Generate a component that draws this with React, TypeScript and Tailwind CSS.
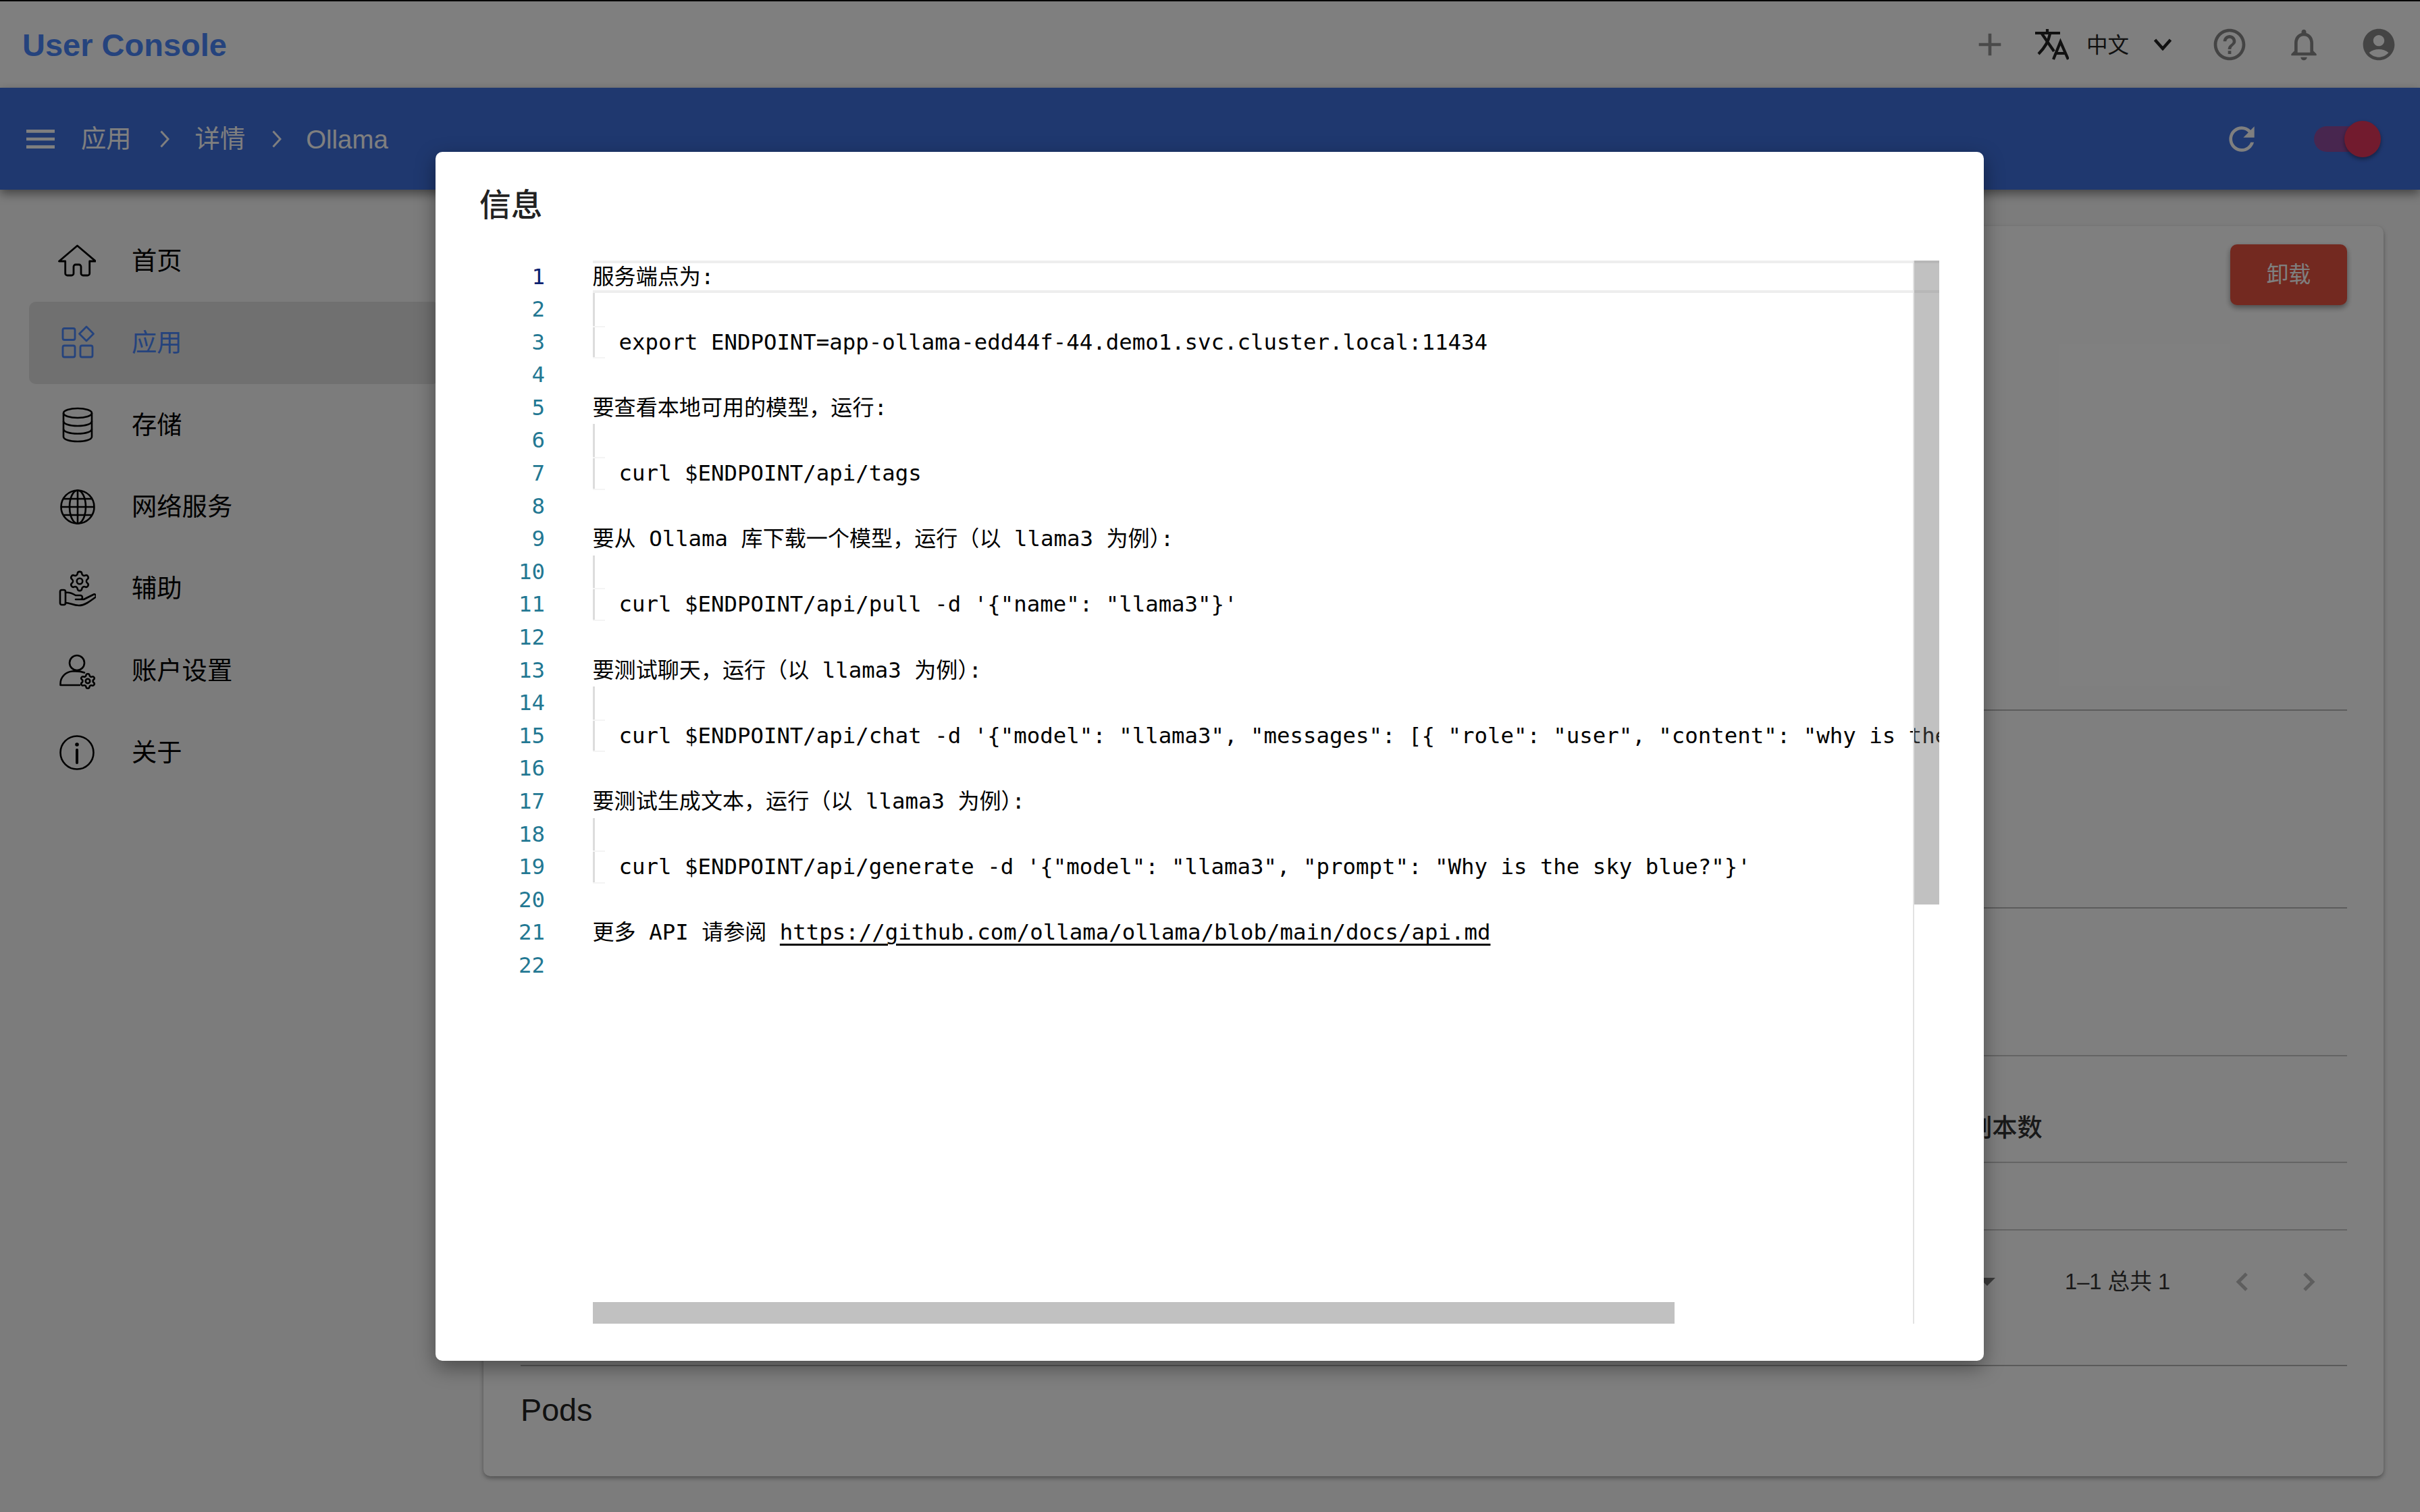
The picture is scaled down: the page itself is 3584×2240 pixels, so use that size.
import React from 'react';
import { Settings } from 'lucide-react';

const uiFont = 'font-["Liberation_Sans","Noto_Sans_CJK_SC",sans-serif]';

type Line = { text?: string; quote?: boolean; link?: [string, string]; tick?: boolean };

const lines: Line[] = [
    { text: '服务端点为:' },
    { quote: true },
    { quote: true, tick: true, text: '  export ENDPOINT=app-ollama-edd44f-44.demo1.svc.cluster.local:11434' },
    {},
    { text: '要查看本地可用的模型，运行:' },
    { quote: true },
    { quote: true, tick: true, text: '  curl $ENDPOINT/api/tags' },
    {},
    { text: '要从 Ollama 库下载一个模型，运行（以 llama3 为例）:' },
    { quote: true },
    { quote: true, tick: true, text: `  curl $ENDPOINT/api/pull -d '{"name": "llama3"}'` },
    {},
    { text: '要测试聊天，运行（以 llama3 为例）:' },
    { quote: true },
    { quote: true, tick: true, text: `  curl $ENDPOINT/api/chat -d '{"model": "llama3", "messages": [{ "role": "user", "content": "why is the sky blue?" }]}'` },
    {},
    { text: '要测试生成文本，运行（以 llama3 为例）:' },
    { quote: true },
    { quote: true, tick: true, text: `  curl $ENDPOINT/api/generate -d '{"model": "llama3", "prompt": "Why is the sky blue?"}'` },
    {},
    { link: ['更多 API 请参阅 ', 'https://github.com/ollama/ollama/blob/main/docs/api.md'] },
    {},
];

// CJK runs sit a touch smaller than the mono cells, and the closing paren is half width
const renderRuns = (text: string) =>
    text.split(/([\u3000-\u9fff\uff00-\uffef]+)/).map((run, i) => {
        if (i % 2 === 0) return run;
        if (run.endsWith('）')) {
            return (
                <span key={i} className="text-[32.1px]">
                    {run.slice(0, -1)}
                    <span className='[font-feature-settings:"halt"]'>）</span>
                </span>
            );
        }
        return <span key={i} className="text-[32.1px]">{run}</span>;
    });

const HomeIcon = () => (
    <svg width="56" height="56" viewBox="0 0 56 56" fill="none" stroke="currentColor" strokeWidth="2.8" strokeLinejoin="round">
        <path d="M28.5 5 L1.5 28 H10.7 V46 a3 3 0 0 0 3 3 H20 a3 3 0 0 0 3-3 V36 a3 3 0 0 1 3-3 h5 a3 3 0 0 1 3 3 V46 a3 3 0 0 0 3 3 H43.7 a3 3 0 0 0 3-3 V28 H55.5 Z" />
    </svg>
);

const AppsIcon = () => (
    <svg width="56" height="56" viewBox="0 0 56 56" fill="none" stroke="currentColor" strokeWidth="2.8" strokeLinejoin="round">
        <rect x="7" y="6.5" width="18" height="17" rx="2.5" />
        <rect x="7" y="32" width="18" height="17" rx="2.5" />
        <rect x="33" y="32" width="18" height="17" rx="2.5" />
        <path d="M42 4 L52.5 14.5 L42 25 L31.5 14.5 Z" />
    </svg>
);

const DatabaseIcon = () => (
    <svg width="56" height="56" viewBox="0 0 56 56" fill="none" stroke="currentColor" strokeWidth="2.6">
        <ellipse cx="29" cy="11" rx="21" ry="7" />
        <path d="M8 11 V46 C8 50 17 53 29 53 C41 53 50 50 50 46 V11" />
        <path d="M8 23 C8 27 17 30 29 30 C41 30 50 27 50 23" />
        <path d="M8 34.500 C8 38.500 17 41.500 29 41.500 C41 41.500 50 38.500 50 34.500" />
    </svg>
);

const GlobeIcon = () => (
    <svg width="56" height="56" viewBox="0 0 56 56" fill="none" stroke="currentColor" strokeWidth="2.6">
        <circle cx="29" cy="28" r="24.500" />
        <ellipse cx="29" cy="28" rx="12" ry="24.500" />
        <path d="M29 3.500 V52.500 M4.500 28 H53.500 M8 16 H50 M8 40 H50" />
    </svg>
);

const HandGearIcon = () => (
    <svg width="56" height="56" viewBox="0 0 56 56" fill="none" stroke="currentColor" strokeWidth="2.6" strokeLinecap="round" strokeLinejoin="round">
        <Settings x={15} y={0} width={34} height={34} strokeWidth={1.8} />
        <rect x="3" y="30" width="8" height="22" rx="2.5" />
        <path d="M11 34 C17 33 21 35 26 38 H33 a3 3 0 0 1 0 6 H26 M33 44 h5 L52 37 a2.5 2.5 0 0 1 3 4 C47 47 39 53 31 53 C22 53 18 49 11 49" />
    </svg>
);

const UserGearIcon = () => (
    <svg width="56" height="56" viewBox="0 0 56 56" fill="none" stroke="currentColor" strokeWidth="2.6" strokeLinecap="round" strokeLinejoin="round">
        <circle cx="28" cy="17" r="11" />
        <path d="M32 50 H3.500 V48 C3.500 38 11 30.500 21 29.500 C28 29 34 29.500 39 31.500" />
        <Settings x={31} y={31} width={26} height={26} strokeWidth={2.4} />
    </svg>
);

const InfoIcon = () => (
    <svg width="56" height="56" viewBox="0 0 56 56" fill="none" stroke="currentColor" strokeWidth="2.6" strokeLinecap="round">
        <circle cx="28" cy="29" r="24.500" />
        <circle cx="28" cy="17" r="2.800" fill="currentColor" stroke="none" />
        <path d="M28 25 V44" strokeWidth="4" />
    </svg>
);

const TranslateIcon = () => (
    <svg width="50" height="46" viewBox="0 0 50 46" fill="none" stroke="currentColor" strokeWidth="4.2">
        <path d="M0 6 H37 M18 0 V6" />
        <path d="M10 7 L28 33 M22 7 C20 18 13 29 5 37" />
        <path d="M27 45 L37.500 19 L49 45 M31 36 H45" />
    </svg>
);

const menuItems = [
    { label: '首页', icon: <HomeIcon /> },
    { label: '应用', icon: <AppsIcon />, active: true },
    { label: '存储', icon: <DatabaseIcon /> },
    { label: '网络服务', icon: <GlobeIcon /> },
    { label: '辅助', icon: <HandGearIcon /> },
    { label: '账户设置', icon: <UserGearIcon /> },
    { label: '关于', icon: <InfoIcon /> },
];

const Crumb = () => (
    <svg width="14" height="26" viewBox="0 0 14 26" fill="none" stroke="currentColor" strokeWidth="3" className="shrink-0">
        <path d="M1.500 1.500 L12 13 L1.500 24.500" />
    </svg>
);

export default function App() {
    return (
        <div className={`relative w-[3584px] h-[2240px] overflow-hidden bg-[#f8f8f8] ${uiFont}`}>
            {/* Top bar */}
            <div className="h-[130px] bg-white border-t-2 border-black flex items-center pl-[33px] pr-[33px]">
                <span className="text-[47px] font-bold text-[#4a86fa] leading-none">User Console</span>
                <div className="ml-auto flex items-center">
                    <svg width="56" height="56" viewBox="0 0 24 24" fill="#949494"><path d="M19 13h-6v6h-2v-6H5v-2h6V5h2v6h6v2z" /></svg>
                    <div className="ml-[39px] text-[#222222]"><TranslateIcon /></div>
                    <span className="ml-[26px] pt-[3px] text-[31.5px] text-[#222222]">中文</span>
                    <svg width="26" height="18" viewBox="0 0 26 18" fill="none" stroke="#222222" strokeWidth="4.500" className="ml-[37px]"><path d="M1.500 2 L13 15 L24.500 2" /></svg>
                    <svg width="56" height="56" viewBox="0 0 24 24" fill="#888888" className="ml-[58px]"><path d="M11 18h2v-2h-2v2zm1-16C6.480 2 2 6.480 2 12s4.480 10 10 10 10-4.480 10-10S17.520 2 12 2zm0 18c-4.410 0-8-3.590-8-8s3.590-8 8-8 8 3.590 8 8-3.590 8-8 8zm0-14c-2.210 0-4 1.790-4 4h2c0-1.100.9-2 2-2s2 .9 2 2c0 2-3 1.750-3 5h2c0-2.250 3-2.500 3-5 0-2.210-1.790-4-4-4z" /></svg>
                    <svg width="56" height="56" viewBox="0 0 24 24" fill="#888888" className="ml-[54px]"><path d="M12 22c1.100 0 2-.9 2-2h-4c0 1.100.9 2 2 2zm6-6v-5c0-3.070-1.630-5.640-4.500-6.320V4c0-.83-.67-1.500-1.500-1.500s-1.500.67-1.500 1.500v.68C7.640 5.360 6 7.920 6 11v5l-2 2v1h16v-1l-2-2zm-2 1H8v-6c0-2.480 1.510-4.500 4-4.500s4 2.020 4 4.500v6z" /></svg>
                    <svg width="56" height="56" viewBox="0 0 24 24" fill="#888888" className="ml-[55px]"><path d="M12 2C6.480 2 2 6.480 2 12s4.480 10 10 10 10-4.480 10-10S17.520 2 12 2zm0 4c1.930 0 3.500 1.570 3.500 3.500S13.930 13 12 13s-3.500-1.570-3.500-3.500S10.070 6 12 6zm0 14c-2.030 0-4.430-.82-6.140-2.880C7.550 15.800 9.680 15 12 15s4.450.8 6.140 2.120C16.430 19.180 14.030 20 12 20z" /></svg>
                </div>
            </div>

            {/* Blue breadcrumb bar */}
            <div className="relative z-10 h-[151px] bg-[#3f70df] text-white shadow-[0_6px_14px_rgba(0,0,0,0.45)] flex items-center pl-[32px] pr-[58px] text-[37.3px] leading-none">
                <svg width="56" height="56" viewBox="0 0 24 24" fill="currentColor" className="shrink-0"><path d="M3 18h18v-2H3v2zm0-5h18v-2H3v2zm0-7v2h18V6H3z" /></svg>
                <span className="ml-[32px] pt-[3px]">应用</span>
                <div className="ml-[42px]"><Crumb /></div>
                <span className="ml-[38px] pt-[3px]">详情</span>
                <div className="ml-[40px]"><Crumb /></div>
                <span className="ml-[36px] pt-[3px] text-[38.4px]">Ollama</span>
                <svg width="56" height="56" viewBox="0 0 24 24" fill="currentColor" className="ml-auto"><path d="M17.650 6.350C16.200 4.900 14.210 4 12 4c-4.420 0-7.990 3.580-7.990 8s3.570 8 7.990 8c3.730 0 6.840-2.550 7.730-6h-2.080c-.82 2.330-3.040 4-5.650 4-3.310 0-6-2.690-6-6s2.690-6 6-6c1.660 0 3.140.69 4.220 1.780L13 11h7V4l-2.350 2.350z" /></svg>
                <div className="relative ml-[79px] w-[99px] h-[54px]">
                    <div className="absolute left-0 top-[8px] w-[84px] h-[38px] rounded-full bg-[#914c9f]" />
                    <div className="absolute right-0 top-0 w-[54px] h-[54px] rounded-full bg-[#e4365c] shadow-[0_3px_6px_rgba(0,0,0,0.4)]" />
                </div>
            </div>

            {/* Body */}
            <div className="flex">
                <nav className="w-[716px] shrink-0 pt-[45px] pl-[43px]">
                    {menuItems.map(item => (
                        <div
                            key={item.label}
                            className={`w-[608px] h-[121.3px] rounded-[10px] pl-[43px] flex items-center gap-[53px] text-[37.3px] ${item.active ? 'bg-[#e0e0e0] text-[#4a86fa]' : 'text-black'}`}
                        >
                            {item.icon}
                            <span className="pt-[3px]">{item.label}</span>
                        </div>
                    ))}
                </nav>

                <main className="mt-[54px] w-[2814px] h-[1852px] bg-white rounded-[10px] shadow-[0_3px_6px_rgba(0,0,0,0.35)] pl-[55px] pr-[54px]">
                    <div className="h-[718px] pt-[27px] flex justify-end border-b-2 border-[#b8b8b8]">
                        <button className="w-[173px] h-[90px] rounded-[10px] bg-[#e65240] text-white text-[32.700px] shadow-[0_4px_8px_rgba(0,0,0,0.4)]">卸载</button>
                    </div>
                    <div className="h-[293px] border-b-2 border-[#b8b8b8]" />
                    <div className="h-[219px] border-b-2 border-[#c8c8c8]" />
                    <div className="h-[158px] border-b-2 border-[#c8c8c8] pl-[2142px] pt-[58px] flex items-center">
                        <span className="text-[37.3px] font-medium text-[#333333]">副本数</span>
                    </div>
                    <div className="h-[100px] border-b-2 border-[#c8c8c8]" />
                    <div className="h-[201px] border-b-2 border-[#b4b4b4] pb-[48px] flex items-center text-[#333333]">
                        <svg width="24" height="12" viewBox="0 0 24 12" fill="#777777" className="ml-[2160px]"><path d="M0 0 H24 L12 12 Z" /></svg>
                        <span className="ml-[103px] text-[32.700px]">1–1 总共 1</span>
                        <svg width="20" height="30" viewBox="0 0 20 30" fill="none" stroke="#bcbcbc" strokeWidth="5" className="ml-[96px]"><path d="M17 3 L5 15 L17 27" /></svg>
                        <svg width="20" height="30" viewBox="0 0 20 30" fill="none" stroke="#bcbcbc" strokeWidth="5" className="ml-[80px]"><path d="M3 3 L15 15 L3 27" /></svg>
                    </div>
                    <div className="pt-[42px] text-[46.700px] leading-none text-[#222222]">Pods</div>
                </main>
            </div>

            {/* Dialog */}
            <div className="absolute inset-0 z-20 bg-black/50 flex items-center justify-center">
                <div className="mr-[1px] w-[2293px] h-[1791px] bg-white rounded-[10px] pl-[65px] pr-[66px] pt-[48px] shadow-[0_10px_30px_rgba(0,0,0,0.4)]">
                    <div className="h-[62px] text-[46.700px] font-medium leading-[62px] text-[#222222]">信息</div>
                    <div className='relative mt-[51px] h-[1575px] overflow-hidden flex font-["DejaVu_Sans_Mono","Noto_Sans_CJK_SC",monospace] text-[32.380px] leading-[48.600px]'>
                        <div className="w-[167.500px] shrink-0 pr-[70.500px] text-right text-[#237893]">
                            {lines.map((_, i) => (
                                <div key={i} className={`h-[48.600px] ${i === 0 ? 'text-[#0b216f]' : ''}`}>{i + 1}</div>
                            ))}
                        </div>
                        <div className="flex-1 min-w-0 text-black">
                            {lines.map((line, i) => (
                                <div
                                    key={i}
                                    className={`relative h-[48.600px] whitespace-pre ${line.quote ? 'shadow-[inset_3px_0_0_#dcdcdc]' : ''}`}
                                >
                                    {i === 0 && <div className="absolute inset-0 border-y-[4px] border-[#eeeeee]" />}
                                    {line.tick && <div className="absolute left-0 top-0 bottom-0 w-[18px] border-y-2 border-[#f4f4f4]" />}
                                    <span className="relative">{line.text && renderRuns(line.text)}</span>
                                    {line.link && (
                                        <span className="relative">
                                            {renderRuns(line.link[0])}
                                            <span className="underline underline-offset-[6px]">{line.link[1]}</span>
                                        </span>
                                    )}
                                </div>
                            ))}
                        </div>
                        <div className="absolute top-0 bottom-0 right-[37px] w-[2px] bg-[#e2e2e2]" />
                        <div className="absolute top-0 right-0 w-[37px] h-[954px] bg-[#64646466]" />
                        <div className="absolute left-[167.500px] bottom-0 w-[1602px] h-[32px] bg-[#64646466]" />
                    </div>
                </div>
            </div>
        </div>
    );
}
